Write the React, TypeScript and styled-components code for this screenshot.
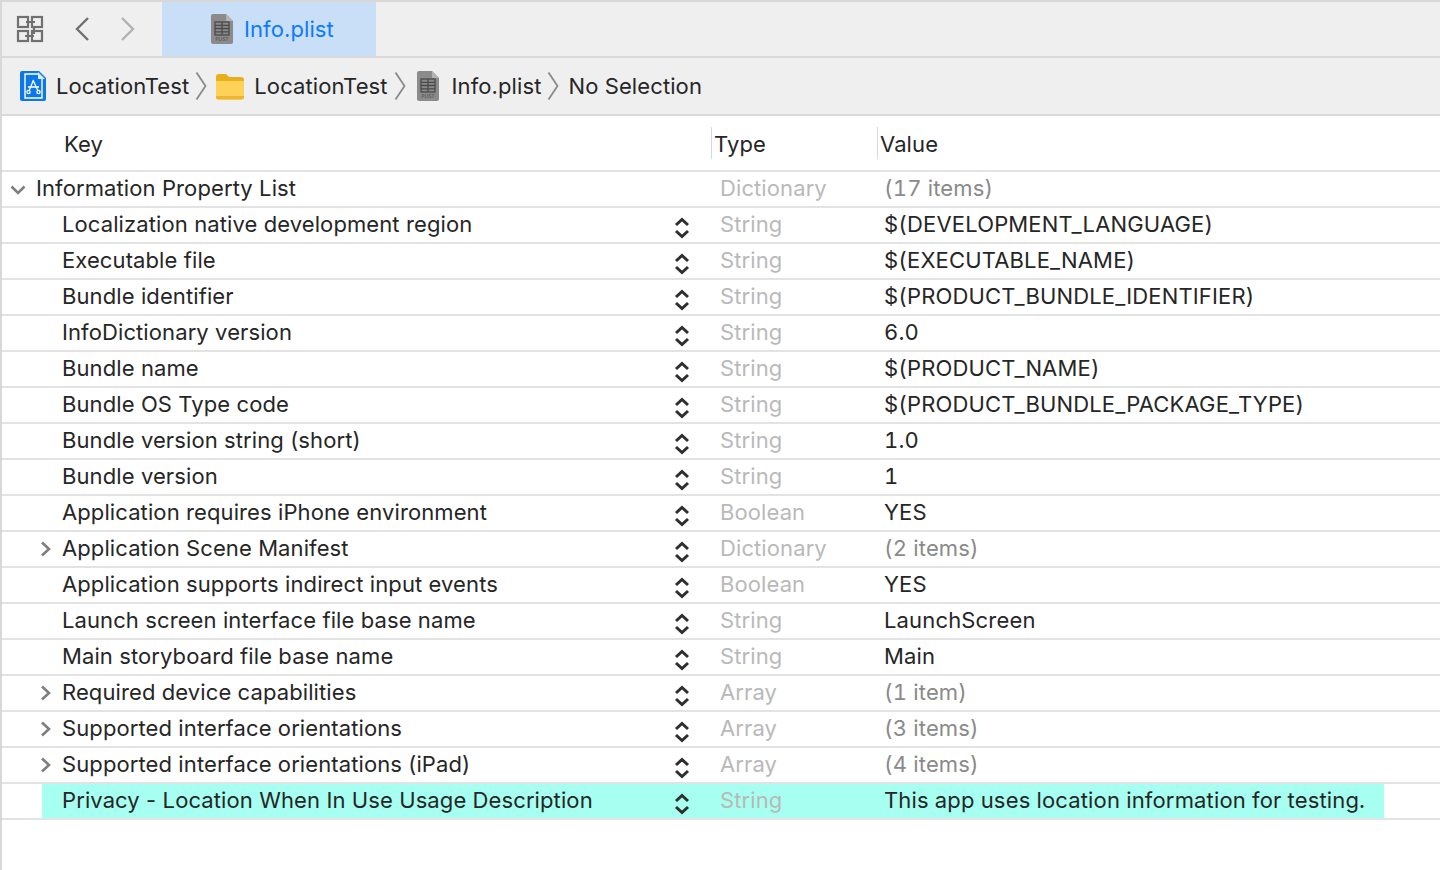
import styled, { createGlobalStyle } from "styled-components";

const GlobalStyle = createGlobalStyle`
  html, body {
    margin: 0;
    padding: 0;
    background: #ffffff;
  }
`;

const Window = styled.div`
  width: 1440px;
  height: 870px;
  box-sizing: border-box;
  overflow: hidden;
  border-top: 2px solid #d8d8d8;
  border-left: 2px solid #d8d8d8;
  font-family: Inter, "Liberation Sans", sans-serif;
  font-size: 22px;
  letter-spacing: 0.1px;
  color: #262626;
  background: #ffffff;
`;

const Toolbar = styled.div`
  display: flex;
  height: 54px;
  background: #efefef;
  border-bottom: 2px solid #d9d9d9;
`;

const ToolIcons = styled.div`
  display: flex;
  align-items: center;
  width: 160px;
  padding-left: 14px;
  box-sizing: border-box;
`;

const NavButton = styled.span`
  display: flex;
  margin-left: ${(p) => p.$gap}px;
`;

const Tab = styled.div`
  display: flex;
  align-items: center;
  gap: 10px;
  width: 214px;
  padding-left: 48px;
  box-sizing: border-box;
  background: #c9dff8;
  color: #0a7aff;
`;

const PathBar = styled.div`
  display: flex;
  align-items: center;
  height: 56px;
  padding-left: 18px;
  background: #efefef;
  border-bottom: 2px solid #d9d9d9;
`;

const Crumb = styled.span`
  margin-left: ${(p) => p.$gap}px;
  white-space: nowrap;
`;

const Separator = styled.svg`
  flex: none;
  margin-left: 6px;
  margin-right: ${(p) => p.$after}px;
`;

const CrumbIcon = styled.svg`
  flex: none;
`;

const Header = styled.div`
  display: grid;
  grid-template-columns: 649px 166px 1fr;
  height: 54px;
  align-items: center;
  padding-left: 60px;
  border-bottom: 2px solid #e3e3e3;
`;

const HeaderCell = styled.div`
  display: flex;
  align-items: center;
  box-sizing: border-box;
  height: 32px;
  padding: 2px 0 0 2px;
  border-left: ${(p) => (p.$divided ? "1px solid #d8d8d8" : "none")};
`;

const Row = styled.div`
  display: flex;
  height: 34px;
  border-bottom: 2px solid #e3e3e3;
`;

const Indent = styled.div`
  position: relative;
  flex: none;
  width: 40px;
`;

const RowBody = styled.div`
  display: grid;
  grid-template-columns: 608px 50px 164px 1fr;
  align-items: center;
  width: 1342px;
  box-sizing: border-box;
  padding: 0 0 2px 20px;
  background: ${(p) => (p.$highlight ? "#a6fff0" : "transparent")};
`;

const KeyLabel = styled.div`
  margin-left: ${(p) => (p.$root ? -26 : 0)}px;
  white-space: nowrap;
`;

const Stepper = styled.svg`
  display: block;
  margin: 8px 0 0 4px;
  justify-self: start;
`;

const TypeLabel = styled.div`
  grid-column: 3;
  color: #b9b9b9;
  white-space: nowrap;
`;

const ValueLabel = styled.div`
  color: ${(p) => (p.$muted ? "#8a8a8a" : "#262626")};
  font-variant-numeric: tabular-nums;
  letter-spacing: 0.16px;
  white-space: nowrap;
`;

const Disclosure = styled.svg`
  position: absolute;
  top: 9px;
  left: ${(p) => p.$left}px;
`;

type RowData = {
  key: string;
  type: string;
  value: string;
  muted?: boolean;
  fold?: "open" | "closed";
};

const rows: RowData[] = [
  { key: "Localization native development region", type: "String", value: "$(DEVELOPMENT_LANGUAGE)" },
  { key: "Executable file", type: "String", value: "$(EXECUTABLE_NAME)" },
  { key: "Bundle identifier", type: "String", value: "$(PRODUCT_BUNDLE_IDENTIFIER)" },
  { key: "InfoDictionary version", type: "String", value: "6.0" },
  { key: "Bundle name", type: "String", value: "$(PRODUCT_NAME)" },
  { key: "Bundle OS Type code", type: "String", value: "$(PRODUCT_BUNDLE_PACKAGE_TYPE)" },
  { key: "Bundle version string (short)", type: "String", value: "1.0" },
  { key: "Bundle version", type: "String", value: "1" },
  { key: "Application requires iPhone environment", type: "Boolean", value: "YES" },
  { key: "Application Scene Manifest", type: "Dictionary", value: "(2 items)", muted: true, fold: "closed" },
  { key: "Application supports indirect input events", type: "Boolean", value: "YES" },
  { key: "Launch screen interface file base name", type: "String", value: "LaunchScreen" },
  { key: "Main storyboard file base name", type: "String", value: "Main" },
  { key: "Required device capabilities", type: "Array", value: "(1 item)", muted: true, fold: "closed" },
  { key: "Supported interface orientations", type: "Array", value: "(3 items)", muted: true, fold: "closed" },
  { key: "Supported interface orientations (iPad)", type: "Array", value: "(4 items)", muted: true, fold: "closed" },
];

const GridIcon = () => (
  <svg width="28" height="28" viewBox="0 0 28 28" fill="none" stroke="#707070" strokeWidth="2.2">
    <rect x="2" y="2" width="10" height="10" />
    <rect x="16" y="2" width="10" height="10" />
    <rect x="2" y="16" width="10" height="10" />
    <rect x="16" y="16" width="10" height="10" />
    <path d="M10 7h9M18 12v7M9 21h9" />
  </svg>
);

const NavChevron = ({ dir, color }: { dir: "left" | "right"; color: string }) => (
  <svg width="16" height="26" viewBox="0 0 16 26" fill="none" stroke={color} strokeWidth="2.4">
    <path d={dir === "left" ? "M14 2 3 13l11 11" : "M2 2l11 11L2 24"} />
  </svg>
);

const PlistIcon = () => (
  <CrumbIcon width="24" height="30" viewBox="0 0 24 30">
    <path d="M3 0h13l7 7v21a2 2 0 0 1-2 2H3a2 2 0 0 1-2-2V2a2 2 0 0 1 2-2z" fill="#8b8b8b" />
    <path d="M16 0l7 7h-7z" fill="#b3b3b3" />
    <g fill="none" stroke="#4a4a4a" strokeWidth="1.3">
      <rect x="5" y="8" width="14" height="13" />
      <path d="M5 11.3h14M5 14.5h14M5 17.8h14M12 8v13" />
    </g>
    <text x="12" y="27" textAnchor="middle" fontSize="4.5" fontWeight="700" fill="#5c5c5c" fontFamily="Inter, sans-serif">
      PLIST
    </text>
  </CrumbIcon>
);

const ProjectIcon = () => (
  <CrumbIcon width="26" height="30" viewBox="0 0 26 30">
    <path d="M2 0h17l7 7v21a2 2 0 0 1-2 2H2a2 2 0 0 1-2-2V2a2 2 0 0 1 2-2z" fill="#0a78e8" />
    <path d="M5 3h13l4 4v20H5z" fill="none" stroke="#ffffff" strokeWidth="1.4" />
    <path d="M18 1l7 7h-7z" fill="#d7ecff" />
    <g fill="none" stroke="#ffffff" strokeWidth="1.3">
      <path d="M13.5 9 9 20M13 9l5 11M8 16h11" />
      <circle cx="8.5" cy="21" r="1.6" />
      <circle cx="18.5" cy="21" r="1.6" />
    </g>
  </CrumbIcon>
);

const FolderIcon = () => (
  <CrumbIcon width="30" height="28" viewBox="0 0 30 28">
    <path d="M1 5a3 3 0 0 1 3-3h7l3 3h12a3 3 0 0 1 3 3v6H1z" fill="#e9ae1c" />
    <path d="M1 9h28v16a2.5 2.5 0 0 1-2.5 2.5h-23A2.5 2.5 0 0 1 1 25z" fill="#ffd257" />
    <path d="M1 24h28v1.5a2 2 0 0 1-2 2H3a2 2 0 0 1-2-2z" fill="#eeb530" />
  </CrumbIcon>
);

const CrumbSeparator = ({ after }: { after: number }) => (
  <Separator $after={after} width="12" height="30" viewBox="0 0 12 30" fill="none" stroke="#8a8a8a" strokeWidth="1.8">
    <path d="M1.5 1.5 10.5 15l-9 13.5" />
  </Separator>
);

const UpDown = () => (
  <Stepper width="16" height="24" viewBox="0 0 16 24" fill="none" stroke="#2e2e2e" strokeWidth="3">
    <path d="M2 9l6-5.5L14 9M2 15l6 5.5L14 15" />
  </Stepper>
);

const Fold = ({ open, left }: { open?: boolean; left: number }) => (
  <Disclosure $left={left} width="16" height="16" viewBox="0 0 16 16" fill="none" stroke="#7f7f7f" strokeWidth="2.6">
    <path d={open ? "M1.5 5.5 8 12l6.5-6.5" : "M3 1.5 10 8l-7 6.5"} />
  </Disclosure>
);

export default function App() {
  return (
    <>
      <GlobalStyle />
      <Window>
        <Toolbar>
          <ToolIcons>
            <GridIcon />
            <NavButton $gap={30}>
              <NavChevron dir="left" color="#707070" />
            </NavButton>
            <NavButton $gap={30}>
              <NavChevron dir="right" color="#b2b2b2" />
            </NavButton>
          </ToolIcons>
          <Tab>
            <PlistIcon />
            Info.plist
          </Tab>
        </Toolbar>
        <PathBar>
          <ProjectIcon />
          <Crumb $gap={10}>LocationTest</Crumb>
          <CrumbSeparator after={8} />
          <FolderIcon />
          <Crumb $gap={9}>LocationTest</Crumb>
          <CrumbSeparator after={10} />
          <PlistIcon />
          <Crumb $gap={12}>Info.plist</Crumb>
          <CrumbSeparator after={9} />
          <Crumb $gap={0}>No Selection</Crumb>
        </PathBar>
        <Header>
          <HeaderCell>Key</HeaderCell>
          <HeaderCell $divided>Type</HeaderCell>
          <HeaderCell $divided>Value</HeaderCell>
        </Header>
        <Row>
          <Indent>
            <Fold open left={8} />
          </Indent>
          <RowBody>
            <KeyLabel $root>Information Property List</KeyLabel>
            <TypeLabel>Dictionary</TypeLabel>
            <ValueLabel $muted>(17 items)</ValueLabel>
          </RowBody>
        </Row>
        {rows.map((r) => (
          <Row key={r.key}>
            <Indent>{r.fold && <Fold left={37} />}</Indent>
            <RowBody>
              <KeyLabel>{r.key}</KeyLabel>
              <UpDown />
              <TypeLabel>{r.type}</TypeLabel>
              <ValueLabel $muted={r.muted}>{r.value}</ValueLabel>
            </RowBody>
          </Row>
        ))}
        <Row>
          <Indent />
          <RowBody $highlight>
            <KeyLabel>Privacy - Location When In Use Usage Description</KeyLabel>
            <UpDown />
            <TypeLabel>String</TypeLabel>
            <ValueLabel>This app uses location information for testing.</ValueLabel>
          </RowBody>
        </Row>
      </Window>
    </>
  );
}
